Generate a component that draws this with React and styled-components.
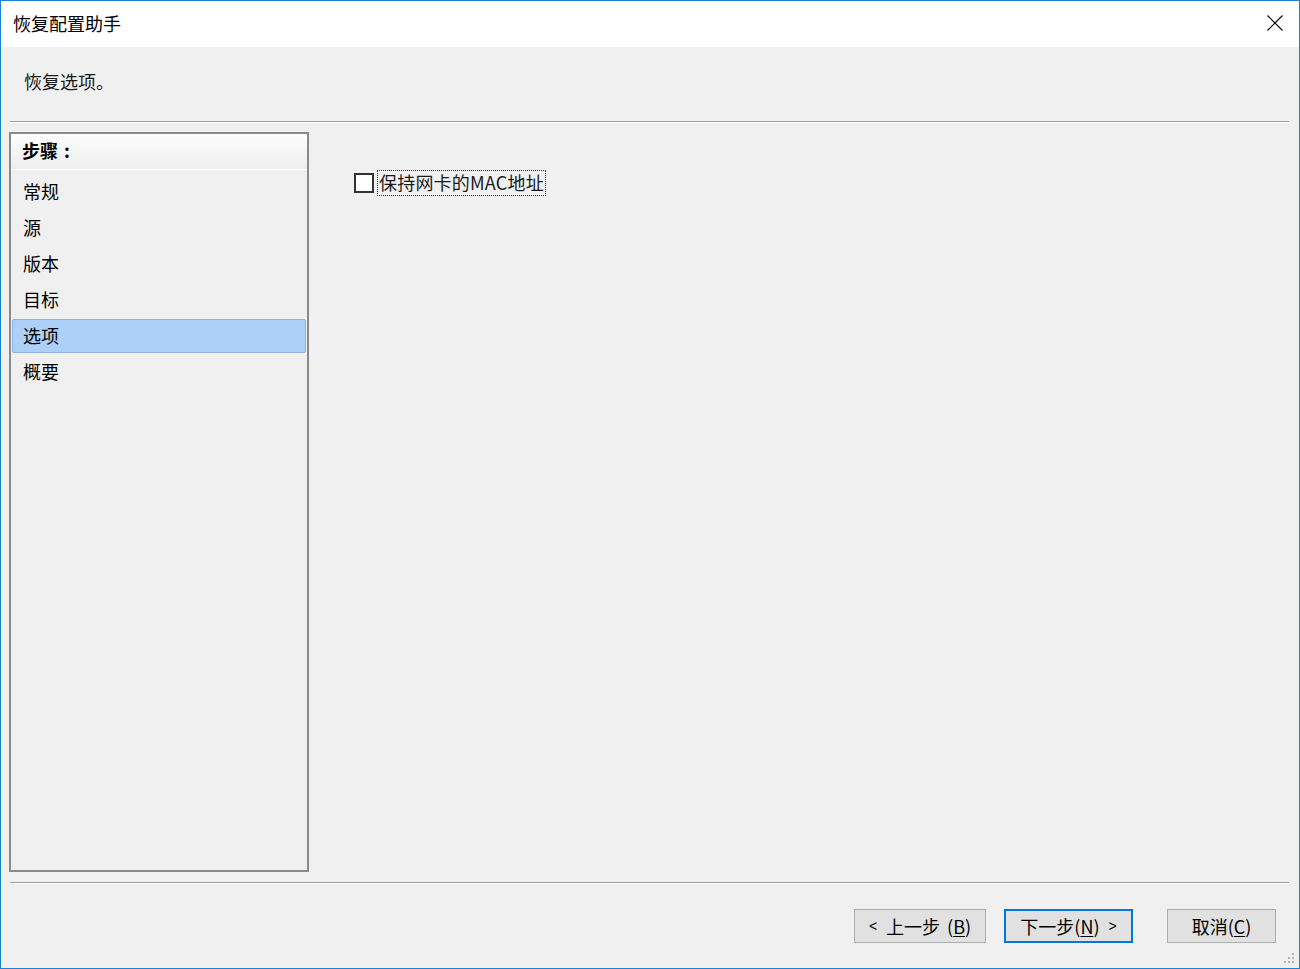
import styled, { createGlobalStyle } from "styled-components";

const GlobalStyle = createGlobalStyle`
  html, body {
    margin: 0;
    padding: 0;
    background: #f0f0f0;
  }
  * {
    box-sizing: border-box;
  }
`;

const Window = styled.div`
  position: relative;
  display: flex;
  flex-direction: column;
  width: 1300px;
  height: 969px;
  border: 1px solid #1883d7;
  background: #f0f0f0;
  font-family: "Noto Sans CJK SC", "Microsoft YaHei", sans-serif;
  font-size: 18px;
  color: #000;
`;

const TitleBar = styled.div`
  display: flex;
  align-items: center;
  justify-content: space-between;
  height: 46px;
  padding: 0 16px 2px 12px;
  background: #ffffff;
  line-height: 24px;
`;

const CloseButton = styled.div`
  display: flex;
  align-items: center;
  justify-content: center;
  width: 16px;
  height: 16px;
`;

const Header = styled.div`
  height: 74px;
  padding: 21px 0 0 23px;
  line-height: 26px;
  color: #1a1a1a;
`;

const Separator = styled.div`
  margin: 0 10px 0 9px;
  height: 2px;
  border-top: 1px solid #a0a0a0;
  border-bottom: 1px solid #ffffff;
`;

const Main = styled.div`
  display: flex;
  margin: 9px 0 10px 8px;
  height: 740px;
`;

const StepPanel = styled.div`
  display: flex;
  flex-direction: column;
  width: 300px;
  height: 100%;
  border: 2px solid #8a8a8a;
  background: #f0f0f0;
`;

const StepHeader = styled.div`
  height: 36px;
  padding: 3px 0 0 11px;
  line-height: 26px;
  font-weight: bold;
  background: linear-gradient(#fdfdfd, #eeeeee);
  border-bottom: 1px solid #ffffff;
`;

const Colon = styled.span`
  margin-left: 6px;
`;

const StepList = styled.div`
  display: flex;
  flex-direction: column;
  gap: 2px;
  padding: 5px 1px 0;
`;

const StepItem = styled.div`
  height: 34px;
  padding: 2px 0 0 10px;
  line-height: 26px;
  border-radius: 2px;
  border: 1px solid ${(p) => (p.$active ? "#8db2e3" : "transparent")};
  background: ${(p) => (p.$active ? "#acd0f7" : "transparent")};
`;

const Content = styled.div`
  flex: 1;
  padding: 38px 0 0 45px;
`;

const CheckRow = styled.label`
  display: flex;
  align-items: center;
  gap: 3px;
`;

const CheckBox = styled.span`
  width: 20px;
  height: 20px;
  border: 2px solid #333333;
  background: #ffffff;
`;

const CheckLabel = styled.span`
  padding: 0 1px;
  height: 26px;
  line-height: 23px;
  border: 1px dotted #333333;
  color: #1a1a1a;
  letter-spacing: 0.2px;
`;

const Footer = styled.div`
  display: flex;
  justify-content: flex-end;
  align-items: flex-start;
  padding: 25px 23px 0 0;
`;

const Button = styled.div`
  display: flex;
  align-items: center;
  justify-content: center;
  width: ${(p) => p.$w}px;
  height: 34px;
  margin-left: ${(p) => p.$gap}px;
  border: ${(p) => (p.$default ? "2px solid #0078d7" : "1px solid #adadad")};
  background: #e1e1e1;
  line-height: 24px;
  white-space: pre;
`;

const Arrow = styled.span`
  font-family: "Liberation Sans", sans-serif;
  font-size: 14px;
  margin: ${(p) => (p.$left ? "0 9px 0 0" : "0 0 0 9px")};
`;

const Mnemonic = styled.span`
  text-decoration: underline;
  text-underline-offset: 2px;
`;

const Gap = styled.span`
  display: inline-block;
  width: 7px;
`;

const Grip = styled.svg`
  position: absolute;
  right: 4px;
  bottom: 3px;
`;

const steps = ["常规", "源", "版本", "目标", "选项", "概要"];

export default function App() {
  return (
    <>
      <GlobalStyle />
      <Window>
        <TitleBar>
          <span>恢复配置助手</span>
          <CloseButton>
            <svg width="16" height="16" viewBox="0 0 16 16">
              <path d="M0.5 0.5 L15.5 15.5 M15.5 0.5 L0.5 15.5" stroke="#000" strokeWidth="1.1" fill="none" />
            </svg>
          </CloseButton>
        </TitleBar>
        <Header>恢复选项。</Header>
        <Separator />
        <Main>
          <StepPanel>
            <StepHeader>
              步骤<Colon>:</Colon>
            </StepHeader>
            <StepList>
              {steps.map((s) => (
                <StepItem key={s} $active={s === "选项"}>
                  {s}
                </StepItem>
              ))}
            </StepList>
          </StepPanel>
          <Content>
            <CheckRow>
              <CheckBox />
              <CheckLabel>保持网卡的MAC地址</CheckLabel>
            </CheckRow>
          </Content>
        </Main>
        <Separator />
        <Footer>
          <Button $w={132} $gap={0}>
            <Arrow $left>&lt;</Arrow>上一步<Gap />(<Mnemonic>B</Mnemonic>)
          </Button>
          <Button $w={129} $gap={18} $default>
            下一步(<Mnemonic>N</Mnemonic>)<Arrow>&gt;</Arrow>
          </Button>
          <Button $w={109} $gap={34}>
            取消(<Mnemonic>C</Mnemonic>)
          </Button>
        </Footer>
        <Grip width="12" height="12" viewBox="0 0 12 12">
          {[
            [9, 0],
            [9, 4],
            [5, 4],
            [9, 8],
            [5, 8],
            [1, 8],
          ].map(([x, y]) => (
            <rect key={`${x}-${y}`} x={x} y={y} width="2" height="2" fill="#b4b4b4" />
          ))}
        </Grip>
      </Window>
    </>
  );
}
